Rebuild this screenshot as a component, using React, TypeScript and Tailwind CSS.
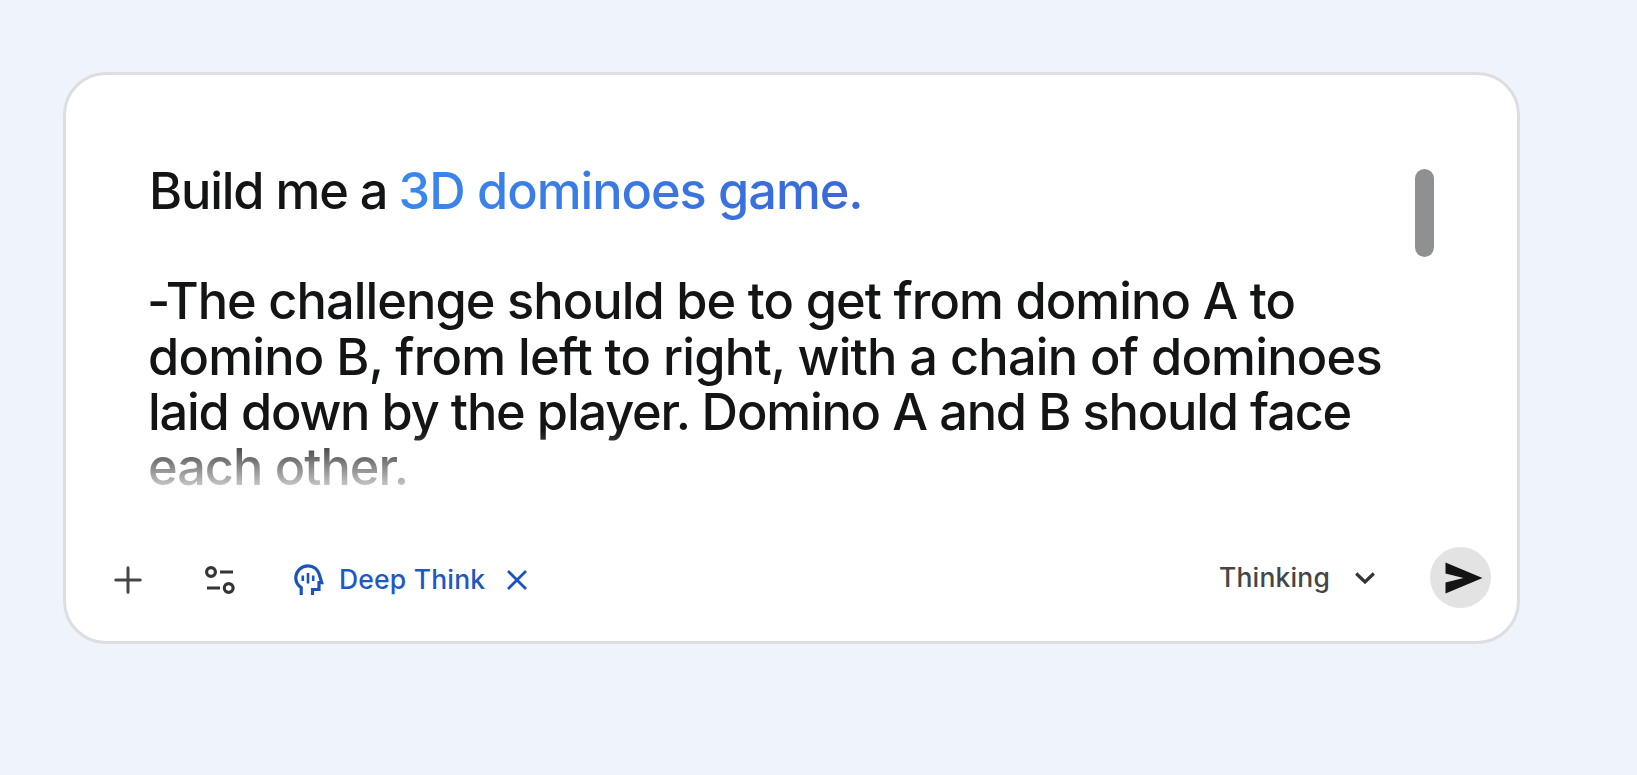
const lines = [
  { text: "-The challenge should be to get from domino A to", className: "-ml-px tracking-[-0.94px]" },
  { text: "domino B, from left to right, with a chain of dominoes", className: "tracking-[-0.77px]" },
  { text: "laid down by the player. Domino A and B should face", className: "tracking-[-1.18px]" },
  { text: "each other.", className: "tracking-[-1.02px]" },
];

function PlusIcon() {
  return (
    <svg width="28" height="28" viewBox="0 0 28 28" fill="none" stroke="#444746" strokeWidth="3" strokeLinecap="round">
      <path d="M14 1.8v24.4M1.8 14h24.4" />
    </svg>
  );
}

function TuneIcon() {
  return (
    <svg width="30" height="28" viewBox="0 0 30 28" fill="none" stroke="#333537" strokeWidth="3.2">
      <circle cx="6" cy="6" r="4.4" />
      <path d="M15 6h13M2 22h13" />
      <circle cx="23.7" cy="22" r="4.4" />
    </svg>
  );
}

function DeepThinkIcon() {
  return (
    <svg width="30" height="32" viewBox="0 0 30 32" fill="none" stroke="#1a53c0" strokeWidth="3.2">
      <path d="M7.2 31v-7.5C3.8 21.4 1.8 18 1.8 14C1.8 7 7.4 1.8 14 1.8C19.4 1.8 24 5.3 25.3 10.500L27.700 18.700H25V25.500H18.500V31" />
      <path d="M8.800 11.500v5.500M14 9v10.500M19.200 11.500v5.500" strokeWidth="2.6" />
    </svg>
  );
}

export default function App() {
  return (
    <div className="h-[775px] w-full bg-[#eff3fb] pl-[63px] pt-[72px] font-['Inter','Liberation_Sans',sans-serif] font-medium">
      <div className="flex h-[572px] w-[1457px] flex-col rounded-[43px] border-3 border-[#dcdee1] bg-white">
        <div className="flex justify-between pl-[82px] pr-[83px] pt-[88px]">
          <div className="whitespace-nowrap text-[50.5px] leading-[55.3px] text-[#131416] mask-[linear-gradient(black_268px,transparent_340px)]">
            <p className="mb-[55px] ml-px tracking-[-1.2px]">
              Build me a{" "}
              <span className="-ml-px bg-linear-to-r from-[#3b87ee] to-[#3a68d8] bg-clip-text tracking-[-1.05px] text-transparent">
                3D dominoes game.
              </span>
            </p>
            {lines.map((line) => (
              <p key={line.text} className={line.className}>
                {line.text}
              </p>
            ))}
          </div>
          <div className="mt-[6px] h-[88px] w-[19px] rounded-full bg-[#8f9092]" />
        </div>

        <div className="mt-auto mb-[33px] flex h-[61px] items-center justify-between pl-[48px] pr-[26px]">
          <div className="flex items-center pt-[4px]">
            <button>
              <PlusIcon />
            </button>
            <button className="ml-[63px]">
              <TuneIcon />
            </button>
            <button className="ml-[59px] flex items-center text-[26.5px] tracking-[0.2px] text-[#1f57c3]">
              <DeepThinkIcon />
              <span className="ml-[15px]">Deep Think</span>
              <svg className="ml-[22px]" width="20" height="20" viewBox="0 0 20 20" fill="none" stroke="#1a53c0" strokeWidth="2.8">
                <path d="M1 1l18 18M19 1L1 19" />
              </svg>
            </button>
          </div>
          <div className="flex items-center">
            <button className="flex items-center text-[26.5px] tracking-[0.15px] text-[#444746]">
              <span>Thinking</span>
              <svg className="ml-[25px]" width="20" height="12" viewBox="0 0 20 12" fill="none" stroke="#333537" strokeWidth="3.2">
                <path d="M1.2 1.5l8.8 8.5l8.8-8.5" />
              </svg>
            </button>
            <button className="ml-[55px] size-[61px] rounded-full bg-[#e3e3e3]">
              <svg width="61" height="61" viewBox="0 0 61 61" fill="#131416">
                <path d="M15.5 15.5L52.5 31L15.5 46.5V35.5L33.5 31L15.5 26.5z" />
              </svg>
            </button>
          </div>
        </div>
      </div>
    </div>
  );
}
